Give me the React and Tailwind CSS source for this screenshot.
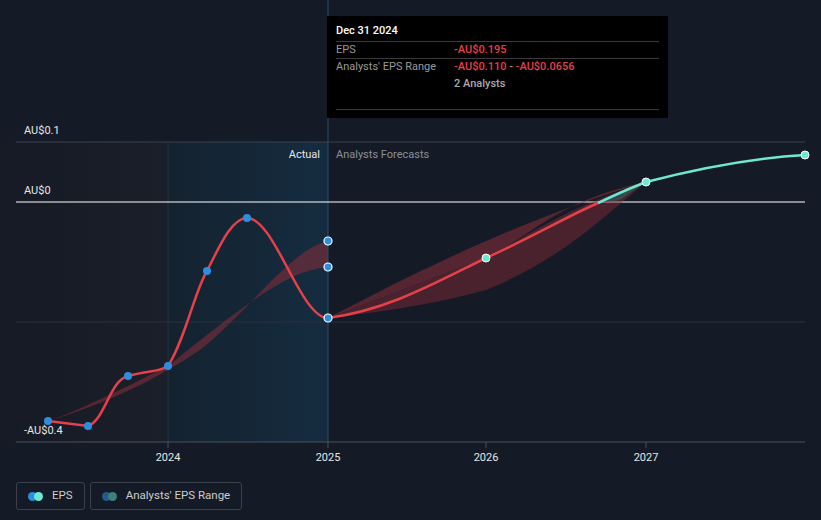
export default function App() {
  const font = { fontFamily: "Roboto, 'Liberation Sans', sans-serif" };
  return (
    <div className="w-[821px] h-[520px] bg-[#151b26] text-white overflow-hidden" style={font}>
      <div className="relative h-[470px]">
        <svg width="821" height="470" className="absolute left-0 top-0">
          <defs>
            <linearGradient id="past" x1="0" x2="1">
              <stop offset="0" stopColor="#151a24" />
              <stop offset="1" stopColor="#1a1f29" />
            </linearGradient>
            <linearGradient id="hl" x1="0" x2="1">
              <stop offset="0" stopColor="#14222f" />
              <stop offset="1" stopColor="#152c40" />
            </linearGradient>
          </defs>
          <rect x="0" y="142" width="168" height="300" fill="url(#past)" />
          <rect x="168" y="142" width="160" height="300" fill="url(#hl)" />
          <line x1="168" y1="142" x2="168" y2="442" stroke="#1d3348" />
          <line x1="328" y1="0" x2="328" y2="442" stroke="#2c4a66" />
          <line x1="16" y1="142" x2="805" y2="142" stroke="#3a4150" />
          <line x1="16" y1="202" x2="805" y2="202" stroke="#ffffff" />
          <line x1="16" y1="322" x2="805" y2="322" stroke="#2a3140" />
          <line x1="16" y1="442" x2="805" y2="442" stroke="#4a505c" />
          {[168, 328, 486, 646].map((x) => (
            <line key={x} x1={x} y1="442" x2={x} y2="448" stroke="#4a505c" />
          ))}
          <path d="M48 421 C120 400 170 370 200 350 C250 310 290 250 328 241 L328 267 C290 270 250 300 168 366 C120 390 80 410 48 421 Z" fill="#8a2d3a" opacity="0.55" />
          <path d="M328 318 C420 270 520 220 646 182 C560 200 540 230 486 258 Z" fill="#8a2d3a" opacity="0.55" />
          <path d="M328 318 C400 310 450 300 486 290 C560 260 600 220 646 182 C560 210 520 240 486 258 Z" fill="#8a2d3a" opacity="0.45" />
          <path d="M598 203 L646 182 L620 200 Z" fill="#2f5a5a" opacity="0.7" />
          <path d="M48 421 L88 426 C105 420 110 380 128 376 C150 370 160 372 168 366 C185 340 195 290 207 271 C220 245 232 218 247 218 C275 218 300 318 328 318 C390 310 440 280 486 258 C530 238 570 215 598 203" fill="none" stroke="#e5414a" strokeWidth="2.5" />
          <path d="M598 203 C615 195 630 188 646 182 C700 168 750 158 805 155" fill="none" stroke="#6ee8d1" strokeWidth="2.5" />
          {[[48,421],[88,426],[128,376],[168,366],[207,271],[247,218]].map(([x,y]) => (
            <circle key={x} cx={x} cy={y} r="4" fill="#2b8fe0" />
          ))}
          {[241, 267, 318].map((y) => (
            <circle key={y} cx="328" cy={y} r="4" fill="#2b8fe0" stroke="#fff" strokeWidth="1.2" />
          ))}
          <circle cx="486" cy="258" r="4" fill="#6ee8d1" stroke="#fff" strokeWidth="1" />
          <circle cx="646" cy="182" r="4" fill="#6ee8d1" stroke="#fff" strokeWidth="1" />
          <circle cx="805" cy="155" r="4" fill="#6ee8d1" stroke="#fff" strokeWidth="1" />
          <g fontSize="11" fill="#e6e6e6" fontFamily="Roboto, sans-serif">
            <text x="24" y="134">AU$0.1</text>
            <text x="24" y="194">AU$0</text>
            <text x="24" y="434">-AU$0.4</text>
            <text x="168" y="461" textAnchor="middle">2024</text>
            <text x="328" y="461" textAnchor="middle">2025</text>
            <text x="486" y="461" textAnchor="middle">2026</text>
            <text x="646" y="461" textAnchor="middle">2027</text>
            <text x="320" y="158" textAnchor="end">Actual</text>
            <text x="336" y="158" fill="#8a8f99">Analysts Forecasts</text>
          </g>
        </svg>
        <div className="absolute left-[327px] top-[16px] w-[341px] h-[102px] bg-black px-[9px] pt-[7px] text-[11px]">
          <div className="font-medium text-white leading-[16px] pb-[2px]">Dec 31 2024</div>
          <div className="flex border-t border-[#3a3a3a] leading-[16px]">
            <span className="w-[118px] text-[#999]">EPS</span>
            <span className="text-[#e5414a] font-medium">-AU$0.195</span>
          </div>
          <div className="flex border-t border-[#3a3a3a] leading-[16px]">
            <span className="w-[118px] text-[#999]">Analysts' EPS Range</span>
            <span className="text-[#e5414a] font-medium">-AU$0.110 <span className="text-[#999]">-</span> -AU$0.0656</span>
          </div>
          <div className="pl-[118px] text-[#aaa] font-medium leading-[18px]">2 Analysts</div>
          <div className="border-t border-[#3a3a3a] mt-[16px]"></div>
        </div>
      </div>
      <div className="flex gap-[5px] pl-[16px] pt-[12px] text-[11.5px] text-[#ccc]">
        <div className="flex items-center gap-[9px] h-[28px] px-[11px] border border-[#3a404c] rounded-[3px]">
          <span className="flex"><span className="w-[9px] h-[9px] rounded-full bg-[#2b8fe0]"></span><span className="w-[9px] h-[9px] rounded-full bg-[#6ee8d1] -ml-[3px]"></span></span>
          EPS
        </div>
        <div className="flex items-center gap-[9px] h-[28px] px-[11px] border border-[#3a404c] rounded-[3px]">
          <span className="flex"><span className="w-[9px] h-[9px] rounded-full bg-[#245a86]"></span><span className="w-[9px] h-[9px] rounded-full bg-[#3f7f7c] -ml-[3px]"></span></span>
          Analysts' EPS Range
        </div>
      </div>
    </div>
  );
}
